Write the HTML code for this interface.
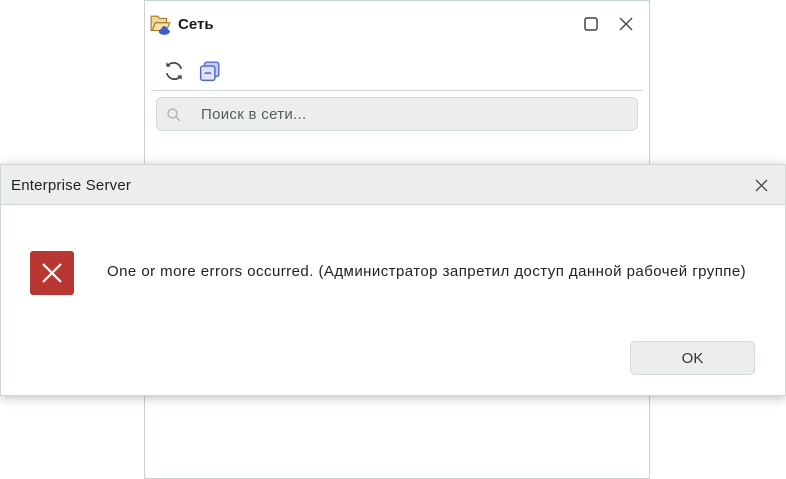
<!DOCTYPE html>
<html><head><meta charset="utf-8"><style>
*{margin:0;padding:0;box-sizing:border-box}
body{width:786px;height:479px;background:#fff;position:relative;overflow:hidden;font-family:"Liberation Sans","DejaVu Sans",sans-serif}
.win{position:absolute;left:144px;top:0;width:506px;height:479px;border:1px solid #c9d3d0;background:#fff}
.title{position:absolute;left:33px;top:15px;font-size:15px;font-weight:bold;color:#1a1a1a}
.sep{position:absolute;left:6px;top:89px;width:492px;height:1px;background:#cfd8d5}
.search{position:absolute;left:11px;top:96px;width:482px;height:34px;background:#eceeed;border:1px solid #d3dad8;border-radius:6px}
.search span{position:absolute;left:44px;top:8px;font-size:15px;color:#555e5c;letter-spacing:0.3px}
.dlg{position:absolute;left:0;top:164px;width:786px;height:232px;background:#fff;border:1px solid #cfd6d4;box-shadow:0 2px 10px rgba(0,0,0,.25)}
.dt{height:40px;background:#eceeed;border-bottom:1px solid #cdd6d3;font-size:15px;color:#222;padding:12px 0 0 10px;letter-spacing:0.2px}
.err{position:absolute;left:29px;top:86px;width:44px;height:44px;background:#b83732;border-radius:3px}
.msg{position:absolute;left:106px;top:98px;font-size:15px;color:#222;letter-spacing:0.45px;white-space:nowrap}
.ok{position:absolute;left:629px;top:176px;width:125px;height:34px;background:#eceeed;border:1px solid #d3dad8;border-radius:5px;font-size:15px;color:#333;text-align:center;line-height:34px}
</style></head><body>
<div class="win">
<svg style="position:absolute;left:5px;top:13px" width="22" height="22" viewBox="0 0 20 20"><path d="M1 2h6l2 2h6v4H5L2 15H1z" fill="#f3d79a" stroke="#a07a2a" stroke-width="1"/><path d="M5 8h13l-3 7H2z" fill="#f7e2b0" stroke="#a07a2a" stroke-width="1"/><ellipse cx="13" cy="16" rx="5" ry="3" fill="#3e5fc8"/><circle cx="13" cy="13.5" r="2.5" fill="#3e5fc8"/></svg>
<div class="title">Сеть</div>
<svg style="position:absolute;left:439px;top:16px" width="14" height="14"><rect x="1" y="1" width="12" height="12" rx="2" fill="none" stroke="#444" stroke-width="1.5"/></svg>
<svg style="position:absolute;left:474px;top:16px" width="14" height="14"><path d="M1 1L13 13M13 1L1 13" stroke="#444" stroke-width="1.4"/></svg>
<svg style="position:absolute;left:18px;top:59px" width="22" height="22" viewBox="0 0 20 20"><path d="M16.5 8A7 7 0 0 0 4 5.5M3.5 12A7 7 0 0 0 16 14.5" fill="none" stroke="#444" stroke-width="1.6"/><path d="M3 2v4h4z" fill="#444"/><path d="M17 18v-4h-4z" fill="#444"/></svg>
<svg style="position:absolute;left:54px;top:59px" width="22" height="22" viewBox="0 0 20 20"><rect x="5" y="2" width="13" height="13" rx="2" fill="#c5cdf3" stroke="#5468c8" stroke-width="1.3"/><rect x="1.5" y="5.5" width="13" height="13" rx="2" fill="#dde2fa" stroke="#5468c8" stroke-width="1.3"/><path d="M5 12h6" stroke="#5468c8" stroke-width="1.4"/></svg>
<div class="sep"></div>
<div class="search"><svg style="position:absolute;left:10px;top:10px" width="14" height="14"><circle cx="5.5" cy="5.5" r="4.5" fill="none" stroke="#aab" stroke-width="1.2"/><path d="M9 9l4 4" stroke="#aab" stroke-width="1.2"/></svg><span>Поиск в сети...</span></div>
</div>
<div class="dlg">
<div class="dt">Enterprise Server</div>
<svg style="position:absolute;left:754px;top:14px" width="13" height="13"><path d="M1 1L12 12M12 1L1 12" stroke="#444" stroke-width="1.3"/></svg>
<div class="err"><svg width="44" height="44"><path d="M13 13L31 31M31 13L13 31" stroke="#fff" stroke-width="2.2"/></svg></div>
<div class="msg">One or more errors occurred. (Администратор запретил доступ данной рабочей группе)</div>
<div class="ok">OK</div>
</div>
</body></html>
